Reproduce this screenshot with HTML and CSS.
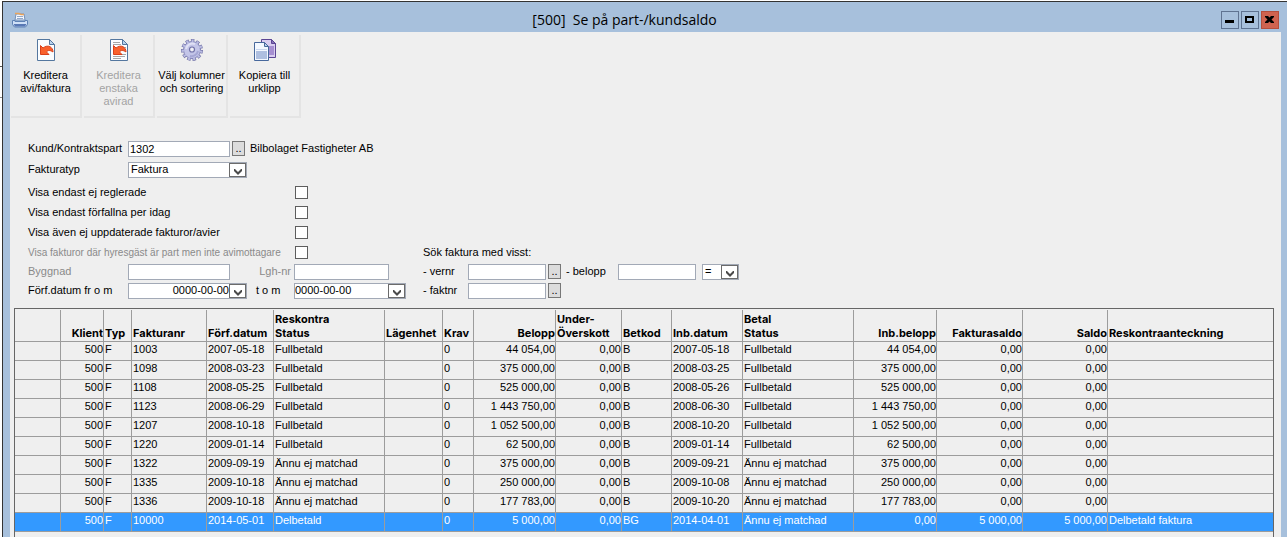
FILE: index.html
```html
<!DOCTYPE html>
<html lang="sv">
<head>
<meta charset="utf-8">
<title>[500] Se på part-/kundsaldo</title>
<link rel="stylesheet" href="styles.css">
</head>
<body>
<div class="window">
  <header class="titlebar">
    <svg class="app-icon" viewBox="0 0 16 16" aria-hidden="true">
      <path d="M3 8l1-6h8l1 6z" fill="#f4f8ff" stroke="#7590b8"/>
      <path d="M3 1.500h4l2 1h3" fill="none" stroke="#e9a45c" stroke-width="1.500"/>
      <path d="M5 4.500h6M5 6.500h6" stroke="#93a9ca"/>
      <path d="M.5 8.500h2.500v1h10v-1h2.500v4l-2 2.500h-11l-2-2.500z" fill="#cfe0f7" stroke="#5f82b5"/>
      <path d="M1.500 12h13l-1.500 2.500H3z" fill="#5878b4"/>
    </svg>
    <h1 class="title">[500]&nbsp; Se på part-/kundsaldo</h1>
    <div class="window-buttons">
      <button class="win-btn" type="button" aria-label="Minimera"><svg viewBox="0 0 16 16"><path d="M3 8h9v3H3z"/></svg></button>
      <button class="win-btn" type="button" aria-label="Maximera"><svg viewBox="0 0 16 16"><path d="M3 4h9v7H3zM5 6v3h5V6z" fill-rule="evenodd"/></svg></button>
      <button class="win-btn close" type="button" aria-label="Stäng"><svg viewBox="0 0 16 16"><path d="M3 4h3l1.500 1.500L9 4h3v1L9.500 7.500 12 10v1H9L7.500 9.500 6 11H3v-1l2.500-2.500L3 5z"/></svg></button>
    </div>
  </header>
  <main class="content">
    <div class="toolbar">
      <button class="tool" type="button">
        <svg class="tool-icon" viewBox="0 0 24 24" aria-hidden="true">
          <path d="M3.500 1.500h12l5 5v16h-17z" fill="#fbfdff" stroke="#54779f"/>
          <path d="M15.500 1.500v5h5z" fill="#b9d3ee" stroke="#54779f"/>
          <path d="M6.500 7.500v9h8.500l-2.500-2.500c1-2 4-2 6.500 0 0-5-5-8-10-4z" fill="#f9602c" stroke="#d9401a"/>
        </svg>
        <span>Kreditera<br>avi/faktura</span>
      </button>
      <button class="tool" type="button" disabled>
        <svg class="tool-icon" viewBox="0 0 24 24" aria-hidden="true">
          <path d="M3.500 1.500h12l5 5v16h-17z" fill="#fbfdff" stroke="#54779f"/>
          <path d="M15.500 1.500v5h5z" fill="#b9d3ee" stroke="#54779f"/>
          <path d="M6 4.500h7M6 6.500h8M15 9.500h4M15 16.500h4M6 18.500h12M6 20.500h8" stroke="#a6a6a6"/>
          <path d="M6.500 7.500v9h8.500l-2.500-2.500c1-2 4-2 6.500 0 0-5-5-8-10-4z" fill="#f9602c" stroke="#d9401a"/>
        </svg>
        <span>Kreditera<br>enstaka<br>avirad</span>
      </button>
      <button class="tool" type="button">
        <svg class="tool-icon" viewBox="0 0 24 24" aria-hidden="true">
          <circle cx="12" cy="12" r="9.500" fill="none" stroke="#7273a6" stroke-width="3" stroke-dasharray="3.400 2.027"/>
          <circle cx="12" cy="12" r="8.500" fill="#c3c5e8" stroke="#7d7eb5"/>
          <circle cx="12" cy="12" r="9" fill="none" stroke="#babce2" stroke-width="3" stroke-dasharray="2 3.141" stroke-dashoffset="-.6"/>
          <path d="M6 11a6.500 6.500 0 0 1 9-5" fill="none" stroke="#e0e1f5" stroke-width="2"/>
          <path d="M18 13a6.500 6.500 0 0 1-8 5" fill="none" stroke="#a5a7d4" stroke-width="2"/>
          <circle cx="12" cy="11.500" r="2.500" fill="#f0f0f5" stroke="#7172a8" stroke-width="1.200"/>
        </svg>
        <span>Välj kolumner<br>och sortering</span>
      </button>
      <button class="tool" type="button">
        <svg class="tool-icon" viewBox="0 0 24 24" aria-hidden="true">
          <path d="M8.500 1.500h10l4 4v14h-14z" fill="#d9cdf0" stroke="#5b4593"/>
          <path d="M18.500 1.500v4h4z" fill="#8672b8" stroke="#5b4593"/>
          <path d="M15 8h6v9h-6z" fill="#a68fd1"/>
          <path d="M1.500 4.500h10l4 4v14h-14z" fill="#f3f8ff" stroke="#47689c"/>
          <path d="M11.500 4.500v4h4z" fill="#b7cfea" stroke="#47689c"/>
          <path d="M3 13h11v8H3z" fill="#aebfe0"/>
          <path d="M3 11.500h11" stroke="#c9d6ee"/>
        </svg>
        <span>Kopiera till<br>urklipp</span>
      </button>
    </div>

    <form class="filters">
      <div class="row tall">
        <label class="label" for="kund">Kund/Kontraktspart</label>
        <input class="field w-main" id="kund" type="text" value="1302">
        <button class="pick" type="button" aria-label="Välj kund">..</button>
        <span class="customer">Bilbolaget Fastigheter AB</span>
      </div>
      <div class="row tall">
        <label class="label" for="typ">Fakturatyp</label>
        <span class="combo w-combo">
          <select id="typ"><option>Faktura</option></select>
          <span class="arrow"><svg viewBox="0 0 8 6"><path d="M0 0v2l4 4 4-4V0H7L4 3 1 0z"/></svg></span>
        </span>
      </div>
      <div class="row check first-check"><label for="c1">Visa endast ej reglerade</label><input id="c1" type="checkbox"></div>
      <div class="row check"><label for="c2">Visa endast förfallna per idag</label><input id="c2" type="checkbox"></div>
      <div class="row check"><label for="c3">Visa även ej uppdaterade fakturor/avier</label><input id="c3" type="checkbox"></div>
      <div class="lower">
        <div class="lower-left">
          <div class="row check low"><label class="dim small" for="c4">Visa fakturor där hyresgäst är part men inte avimottagare</label><input id="c4" type="checkbox"></div>
          <div class="row low">
            <label class="label dim" for="byggnad">Byggnad</label>
            <span class="slot"><input class="field w-main" id="byggnad" type="text"></span>
            <label class="mid dim end" for="lgh">Lgh-nr</label>
            <input class="field w-lgh" id="lgh" type="text">
          </div>
          <div class="row low">
            <label class="label" for="from">Förf.datum fr o m</label>
            <span class="slot"><span class="combo w-combo">
              <input class="right" id="from" type="text" value="0000-00-00">
              <button class="arrow" type="button" aria-label="Välj datum från"><svg viewBox="0 0 8 6"><path d="M0 0v2l4 4 4-4V0H7L4 3 1 0z"/></svg></button>
            </span></span>
            <label class="mid" for="tom">t o m</label>
            <span class="combo w-date">
              <input id="tom" type="text" value="0000-00-00">
              <button class="arrow" type="button" aria-label="Välj datum till"><svg viewBox="0 0 8 6"><path d="M0 0v2l4 4 4-4V0H7L4 3 1 0z"/></svg></button>
            </span>
          </div>
        </div>
        <div class="lower-right">
          <div class="row low">Sök faktura med visst:</div>
          <div class="row low">
            <label class="short" for="vernr">- vernr</label>
            <input class="field w-nr" id="vernr" type="text">
            <button class="pick" type="button" aria-label="Välj vernr">..</button>
            <label class="amount" for="belopp">- belopp</label>
            <input class="field w-nr" id="belopp" type="text">
            <span class="combo w-op">
              <select aria-label="Jämförelse"><option>=</option></select>
              <span class="arrow"><svg viewBox="0 0 8 6"><path d="M0 0v2l4 4 4-4V0H7L4 3 1 0z"/></svg></span>
            </span>
          </div>
          <div class="row low">
            <label class="short" for="faktnr">- faktnr</label>
            <input class="field w-nr" id="faktnr" type="text">
            <button class="pick" type="button" aria-label="Välj faktnr">..</button>
          </div>
        </div>
      </div>
    </form>

    <div class="grid">
      <table>
        <colgroup>
          <col class="c-mark"><col class="c-klient"><col class="c-typ"><col class="c-nr"><col class="c-forf"><col class="c-status"><col class="c-lgh"><col class="c-krav"><col class="c-belopp"><col class="c-over"><col class="c-kod"><col class="c-inb"><col class="c-status"><col class="c-inbelopp"><col class="c-fsaldo"><col class="c-saldo"><col>
        </colgroup>
        <thead>
          <tr><th></th><th class="n">Klient</th><th>Typ</th><th>Fakturanr</th><th>Förf.datum</th><th>Reskontra<br>Status</th><th>Lägenhet</th><th>Krav</th><th class="n">Belopp</th><th>Under-<br>Överskott</th><th>Betkod</th><th>Inb.datum</th><th>Betal<br>Status</th><th class="n">Inb.belopp</th><th class="n">Fakturasaldo</th><th class="n">Saldo</th><th>Reskontraanteckning</th></tr>
        </thead>
        <tbody>
          <tr><td></td><td class="n">500</td><td>F</td><td>1003</td><td>2007-05-18</td><td>Fullbetald</td><td></td><td>0</td><td class="n">44 054,00</td><td class="n">0,00</td><td>B</td><td>2007-05-18</td><td>Fullbetald</td><td class="n">44 054,00</td><td class="n">0,00</td><td class="n">0,00</td><td></td></tr>
          <tr><td></td><td class="n">500</td><td>F</td><td>1098</td><td>2008-03-23</td><td>Fullbetald</td><td></td><td>0</td><td class="n">375 000,00</td><td class="n">0,00</td><td>B</td><td>2008-03-25</td><td>Fullbetald</td><td class="n">375 000,00</td><td class="n">0,00</td><td class="n">0,00</td><td></td></tr>
          <tr><td></td><td class="n">500</td><td>F</td><td>1108</td><td>2008-05-25</td><td>Fullbetald</td><td></td><td>0</td><td class="n">525 000,00</td><td class="n">0,00</td><td>B</td><td>2008-05-26</td><td>Fullbetald</td><td class="n">525 000,00</td><td class="n">0,00</td><td class="n">0,00</td><td></td></tr>
          <tr><td></td><td class="n">500</td><td>F</td><td>1123</td><td>2008-06-29</td><td>Fullbetald</td><td></td><td>0</td><td class="n">1 443 750,00</td><td class="n">0,00</td><td>B</td><td>2008-06-30</td><td>Fullbetald</td><td class="n">1 443 750,00</td><td class="n">0,00</td><td class="n">0,00</td><td></td></tr>
          <tr><td></td><td class="n">500</td><td>F</td><td>1207</td><td>2008-10-18</td><td>Fullbetald</td><td></td><td>0</td><td class="n">1 052 500,00</td><td class="n">0,00</td><td>B</td><td>2008-10-20</td><td>Fullbetald</td><td class="n">1 052 500,00</td><td class="n">0,00</td><td class="n">0,00</td><td></td></tr>
          <tr><td></td><td class="n">500</td><td>F</td><td>1220</td><td>2009-01-14</td><td>Fullbetald</td><td></td><td>0</td><td class="n">62 500,00</td><td class="n">0,00</td><td>B</td><td>2009-01-14</td><td>Fullbetald</td><td class="n">62 500,00</td><td class="n">0,00</td><td class="n">0,00</td><td></td></tr>
          <tr><td></td><td class="n">500</td><td>F</td><td>1322</td><td>2009-09-19</td><td>Ännu ej matchad</td><td></td><td>0</td><td class="n">375 000,00</td><td class="n">0,00</td><td>B</td><td>2009-09-21</td><td>Ännu ej matchad</td><td class="n">375 000,00</td><td class="n">0,00</td><td class="n">0,00</td><td></td></tr>
          <tr><td></td><td class="n">500</td><td>F</td><td>1335</td><td>2009-10-18</td><td>Ännu ej matchad</td><td></td><td>0</td><td class="n">250 000,00</td><td class="n">0,00</td><td>B</td><td>2009-10-08</td><td>Ännu ej matchad</td><td class="n">250 000,00</td><td class="n">0,00</td><td class="n">0,00</td><td></td></tr>
          <tr><td></td><td class="n">500</td><td>F</td><td>1336</td><td>2009-10-18</td><td>Ännu ej matchad</td><td></td><td>0</td><td class="n">177 783,00</td><td class="n">0,00</td><td>B</td><td>2009-10-20</td><td>Ännu ej matchad</td><td class="n">177 783,00</td><td class="n">0,00</td><td class="n">0,00</td><td></td></tr>
          <tr class="selected"><td></td><td class="n">500</td><td>F</td><td>10000</td><td>2014-05-01</td><td>Delbetald</td><td></td><td>0</td><td class="n">5 000,00</td><td class="n">0,00</td><td>BG</td><td>2014-04-01</td><td>Ännu ej matchad</td><td class="n">0,00</td><td class="n">5 000,00</td><td class="n">5 000,00</td><td>Delbetald faktura</td></tr>
        </tbody>
      </table>
    </div>
  </main>
</div>
</body>
</html>
```
FILE: styles.css
```css
* { box-sizing: border-box; }

body {
  margin: 0;
  color: #000;
  background:
    linear-gradient(#555, #555) 0 66px / 3px 1px no-repeat,
    linear-gradient(#888, #888) 0 97px / 3px 1px no-repeat,
    #fff;
  font: 11px/13px "Liberation Sans", Arial, sans-serif;
}

button, input, select {
  margin: 0;
  padding: 0;
  border: 0;
  border-radius: 0;
  color: inherit;
  background: none;
  font: inherit;
  appearance: none;
}

svg { display: block; }

.window {
  display: flex;
  flex-direction: column;
  min-height: calc(100vh - 1px);
  margin: 1px 0 0 2px;
  padding: 0 6px 0 7px;
  border-top: 1px solid #333;
  border-left: 1px solid #333;
  background: #a7c0dc;
}

.titlebar {
  display: flex;
  align-items: center;
  height: 30px;
  padding: 6px 2px 0;
}
.app-icon { width: 16px; height: 16px; }
.title {
  flex: 1;
  margin: 0;
  text-align: center;
  font: 14px/20px "Open Sans", sans-serif;
}
.window-buttons { display: flex; gap: 2px; }
.win-btn {
  width: 18px;
  height: 18px;
  border: 1px solid #5f7391;
}
.win-btn.close { background: #cf6350; border-color: #b54e3c; }

.content {
  flex: 1;
  display: flex;
  flex-direction: column;
  background: #efefef;
}

.toolbar {
  display: flex;
  gap: 2px;
  padding: 3px 1px 0;
}
.tool {
  display: flex;
  flex-direction: column;
  align-items: center;
  gap: 7px;
  width: 71px;
  height: 83px;
  padding-top: 3px;
  border-right: 2px solid #e4e4e4;
  border-bottom: 2px solid #e4e4e4;
  white-space: nowrap;
}
.tool:disabled { color: #a3a3a3; }
.tool-icon { width: 24px; height: 24px; }

.filters { padding: 20px 18px 0; }
.row {
  display: flex;
  align-items: center;
  height: 20px;
  white-space: nowrap;
}
.row.tall { height: 21px; }
.row.low { height: 19px; }
.first-check { margin-top: 2px; }
.label { width: 100px; }
.dim { color: #8a8a8a; }
.small { font-size: 10px; }
.field {
  height: 16px;
  padding: 0 1px;
  border: 1px solid #a2a9b6;
  background: #fff;
}
.w-main { width: 102px; }
.w-combo { width: 119px; }
.w-lgh { width: 95px; }
.w-date { width: 112px; }
.w-nr { width: 78px; }
.w-op { width: 37px; margin-left: 6px; }
.slot { display: flex; width: 126px; }
.mid { width: 40px; padding: 0 3px 0 2px; }
.end { text-align: right; }
.short { width: 45px; }
.amount { width: 57px; padding-left: 5px; }
.customer { padding-left: 5px; }

.pick {
  width: 13px;
  height: 15px;
  margin-left: 2px;
  border: 1px solid #777;
  background: #dcdcdc;
}

.combo {
  position: relative;
  display: flex;
  height: 16px;
  border: 1px solid #a2a9b6;
  background: #fff;
}
.combo input { flex: 1; min-width: 0; }
.combo input.right { text-align: right; }
.combo select { width: 100%; padding-left: 2px; }
.arrow {
  display: flex;
  align-items: center;
  justify-content: center;
  width: 17px;
  height: 14px;
  padding-top: 4px;
  border: 1px solid #6b6b6b;
  background: #fff;
}
.arrow svg { width: 8px; height: 6px; fill: #4a4a4a; }
select + .arrow {
  position: absolute;
  top: 0;
  right: 0;
  pointer-events: none;
}

.check label { width: 267px; }
.check input {
  width: 13px;
  height: 13px;
  border: 1px solid #5e5e5e;
  background: #fff;
}
.check input:checked { background: #444; }

.lower { display: flex; margin-top: 1px; }
.lower-left { width: 395px; }

.grid {
  flex: 1;
  margin: 8px 7px 0 4px;
  padding-top: 1px;
  border: 1px solid #666;
  border-bottom: 0;
}
table {
  width: 100%;
  table-layout: fixed;
  border-collapse: separate;
  border-spacing: 0;
}
th, td {
  padding: 0 0 0 1px;
  border-right: 1px solid #9c9c9c;
  border-bottom: 1px solid #9c9c9c;
  text-align: left;
  white-space: nowrap;
}
th {
  height: 32px;
  padding-bottom: 1px;
  vertical-align: bottom;
  font: bold 11px/14px Inter, sans-serif;
}
td { height: 19px; padding-bottom: 3px; }
th:last-child, td:last-child { border-right: 0; }
.n { padding-right: 0; text-align: right; }
.selected { color: #fff; background: #3399ff; }

.c-mark { width: 46px; }
.c-klient { width: 43px; }
.c-typ { width: 28px; }
.c-nr { width: 75px; }
.c-forf { width: 67px; }
.c-status { width: 111px; }
.c-lgh { width: 58px; }
.c-krav { width: 31px; }
.c-belopp { width: 82px; }
.c-over { width: 66px; }
.c-kod { width: 50px; }
.c-inb { width: 71px; }
.c-inbelopp { width: 83px; }
.c-fsaldo { width: 86px; }
.c-saldo { width: 85px; }
```
